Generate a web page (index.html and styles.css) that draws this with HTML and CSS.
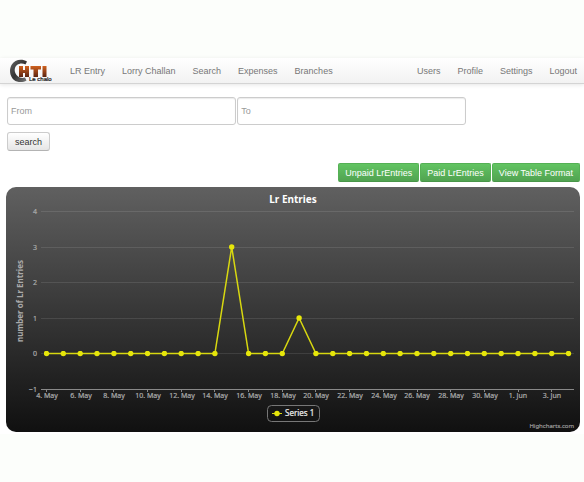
FILE: index.html
```html
<!DOCTYPE html>
<html lang="en">
<head>
<meta charset="utf-8">
<title>Lr Entries</title>
<link rel="stylesheet" href="styles.css">
</head>
<body>
<div class="page">
  <header class="navbar">
    <a class="brand" href="#" aria-label="CHTI Le chalo">
      <svg class="logo" width="44" height="24" viewBox="0 0 44 24">
        <defs>
          <linearGradient id="ring" x1="0" y1="0" x2="1" y2="1">
            <stop offset="0" stop-color="#666"/><stop offset=".5" stop-color="#333"/><stop offset="1" stop-color="#777"/>
          </linearGradient>
          <linearGradient id="rust" x1="0" y1="0" x2="0" y2="1">
            <stop offset="0" stop-color="#d0611f"/><stop offset="1" stop-color="#5a2410"/>
          </linearGradient>
        </defs>
        <path d="M18 2.500 C13 -.5 5.500 .5 2.500 6 C-1 12.500 2 20.500 8 22.500 C11.500 23.600 15 23 17.500 21.500 L16 18.500 C13 19.500 9.500 18.500 7.500 16 C5 13 5 8.500 8 6 C10.500 4 14 4 16.500 5.500 Z" fill="url(#ring)"/>
        <path d="M10 7h4v4h2v-4h4v11h-4v-4h-2v4h-4z M21.500 7h10.500v3.500h-3v7.500h-4.500v-7.500h-3z M33.500 7h4v11h-4z" fill="url(#rust)"/>
        <text class="tagline" x="20" y="22">Le chalo</text>
      </svg>
    </a>
    <nav class="links">
      <a href="#">LR Entry</a>
      <a href="#">Lorry Challan</a>
      <a href="#">Search</a>
      <a href="#">Expenses</a>
      <a href="#">Branches</a>
    </nav>
    <nav class="links account">
      <a href="#">Users</a>
      <a href="#">Profile</a>
      <a href="#">Settings</a>
      <a href="#">Logout</a>
    </nav>
  </header>
  <main class="content">
    <form class="filter">
      <div class="fields">
        <input type="text" placeholder="From" aria-label="From">
        <input type="text" placeholder="To" aria-label="To">
      </div>
      <button class="btn" type="button">search</button>
    </form>
    <div class="actions">
      <button class="btn success" type="button">Unpaid LrEntries</button>
      <button class="btn success" type="button">Paid LrEntries</button>
      <button class="btn success" type="button">View Table Format</button>
    </div>
    <svg class="chart" viewBox="0 0 574 245" role="img" aria-label="Lr Entries">
      <defs>
        <linearGradient id="panel" x1="0" y1="0" x2="0" y2="1">
          <stop offset="0" stop-color="#606060"/><stop offset="1" stop-color="#101010"/>
        </linearGradient>
        <marker id="dot" markerUnits="userSpaceOnUse" markerWidth="6" markerHeight="6" refX="3" refY="3">
          <circle cx="3" cy="3" r="2.700" fill="#e6e60a"/>
        </marker>
      </defs>
      <rect width="574" height="245" rx="10" fill="url(#panel)"/>
      <text class="title" x="287" y="16">Lr Entries</text>
      <path class="grid" d="M35 24.500H568M35 60.500H568M35 95.500H568M35 131.500H568M35 166.500H568"/>
      <path class="axis" d="M35 202.500H568"/>
      <path class="axis" d="M40.500 202v3M74.500 202v3M107.500 202v3M141.500 202v3M175.500 202v3M208.500 202v3M242.500 202v3M276.500 202v3M309.500 202v3M343.500 202v3M377.500 202v3M411.500 202v3M444.500 202v3M478.500 202v3M512.500 202v3M545.500 202v3"/>
      <g class="label y">
        <text x="31" y="27">4</text>
        <text x="31" y="63">3</text>
        <text x="31" y="98">2</text>
        <text x="31" y="134">1</text>
        <text x="31" y="169">0</text>
        <text x="31" y="205">−1</text>
      </g>
      <text class="ytitle" transform="translate(17 114) rotate(-90)">number of Lr Entries</text>
      <g class="label x">
        <text x="41" y="211">4. May</text>
        <text x="75" y="211">6. May</text>
        <text x="108" y="211">8. May</text>
        <text x="142" y="211">10. May</text>
        <text x="176" y="211">12. May</text>
        <text x="209" y="211">14. May</text>
        <text x="243" y="211">16. May</text>
        <text x="277" y="211">18. May</text>
        <text x="310" y="211">20. May</text>
        <text x="344" y="211">22. May</text>
        <text x="378" y="211">24. May</text>
        <text x="411" y="211">26. May</text>
        <text x="445" y="211">28. May</text>
        <text x="479" y="211">30. May</text>
        <text x="512" y="211">1. Jun</text>
        <text x="546" y="211">3. Jun</text>
      </g>
      <polyline class="series" points="40.500,166.500 57.300,166.500 74.200,166.500 91,166.500 107.900,166.500 124.700,166.500 141.500,166.500 158.400,166.500 175.200,166.500 192.100,166.500 208.900,166.500 225.700,60 242.600,166.500 259.400,166.500 276.300,166.500 293.100,131 309.900,166.500 326.800,166.500 343.600,166.500 360.500,166.500 377.300,166.500 394.100,166.500 411,166.500 427.800,166.500 444.700,166.500 461.500,166.500 478.300,166.500 495.200,166.500 512,166.500 528.900,166.500 545.700,166.500 562.500,166.500"/>
      <rect class="legend" x="261.500" y="218.500" width="52" height="16" rx="4"/>
      <path class="key" d="M266 226.500H276"/>
      <circle cx="271" cy="226.500" r="2.700" fill="#e6e60a"/>
      <text class="legend-text" x="279" y="229">Series 1</text>
      <text class="credit" x="568" y="241">Highcharts.com</text>
    </svg>
  </main>
</div>
</body>
</html>
```
FILE: styles.css
```css
* {
  box-sizing: border-box;
}

body {
  margin: 0;
  padding-top: 58px;
  background: #fcfefb;
  color: #333;
  font-family: "Liberation Sans", Arial, sans-serif;
  font-size: 9px;
  line-height: 12px;
}

.page {
  background: #fff;
}

.navbar {
  display: flex;
  align-items: center;
  height: 26px;
  padding: 0 7px 0 9px;
  background: linear-gradient(#fff, #f2f2f2);
  border-bottom: 1px solid #d4d4d4;
  box-shadow: 0 1px 4px rgba(0, 0, 0, 0.1);
}

.brand {
  display: flex;
  margin-right: 17px;
}

.tagline {
  font-size: 6px;
  fill: #111;
  stroke: #111;
  stroke-width: 0.2;
}

.links {
  display: flex;
  gap: 17px;
}

.links a {
  color: #777;
  text-decoration: none;
}

.account {
  margin-left: auto;
}

.content {
  padding: 13px 4px 2px 6px;
}

.filter {
  padding-left: 1px;
}

.fields {
  display: flex;
  gap: 1px;
  margin-bottom: 7px;
}

.fields input {
  width: 40%;
  height: 28px;
  padding: 0 3px;
  border: 1px solid #ccc;
  border-radius: 3px;
  box-shadow: inset 0 1px 1px rgba(0, 0, 0, 0.08);
  background: #fff;
  color: #555;
  font: inherit;
}

.fields input::placeholder {
  color: #999;
  opacity: 1;
}

.btn {
  height: 19px;
  padding: 0 7px;
  border: 1px solid #ccc;
  border-bottom-color: #b3b3b3;
  border-radius: 3px;
  background: linear-gradient(#fff, #e6e6e6);
  color: #333;
  font: inherit;
}

.actions {
  display: flex;
  justify-content: flex-end;
  gap: 1px;
  margin: 12px 0 5px;
}

.success {
  padding: 0 6px;
  border-color: #55b055 #55b055 #489648;
  border-radius: 2px;
  background: linear-gradient(#62c462, #51a351);
  color: #fff;
}

.chart {
  display: block;
  width: 100%;
  font-family: "Noto Sans", sans-serif;
}

.title {
  fill: #fff;
  font-size: 10px;
  font-weight: bold;
  text-anchor: middle;
}

.grid {
  stroke: #fff;
  stroke-opacity: 0.1;
}

.axis {
  stroke: #888;
}

.label {
  fill: #aaa;
  stroke: #aaa;
  stroke-width: 0.2;
  font-size: 7px;
}

.label.x {
  text-anchor: middle;
}

.label.y {
  text-anchor: end;
}

.ytitle {
  fill: #aaa;
  font-size: 8px;
  font-weight: bold;
  text-anchor: middle;
}

.series {
  fill: none;
  stroke: #d8d810;
  stroke-width: 1.5;
  marker-start: url(#dot);
  marker-mid: url(#dot);
  marker-end: url(#dot);
}

.key {
  stroke: #d8d810;
}

.legend {
  fill: none;
  stroke: #777;
}

.legend-text {
  fill: #eee;
  stroke: #eee;
  stroke-width: 0.2;
  font-size: 8px;
}

.credit {
  fill: #999;
  stroke: #999;
  stroke-width: 0.2;
  font-size: 6px;
  text-anchor: end;
}
```
